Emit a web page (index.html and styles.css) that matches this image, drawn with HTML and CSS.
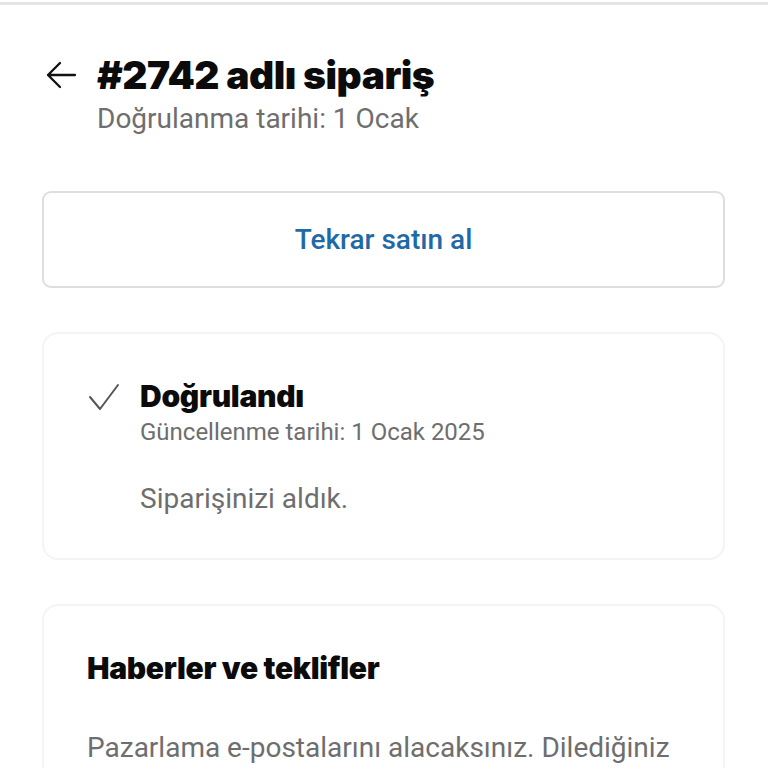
FILE: index.html
```html
<!DOCTYPE html>
<html lang="tr">
<head>
<meta charset="utf-8">
<link rel="stylesheet" href="styles.css">
</head>
<body>
<div class="topbar"></div>
<main class="page">
  <header class="header">
    <svg class="back" viewBox="0 0 32 32" width="32" height="32" aria-hidden="true">
      <path d="M30 16H3M15 4L3 16l12 12" fill="none" stroke="#111" stroke-width="2.3" stroke-linecap="round" stroke-linejoin="round"/>
    </svg>
    <div class="titles">
      <h1 class="title">#2742 adlı sipariş</h1>
      <p class="subtitle">Doğrulanma tarihi: 1 Ocak</p>
    </div>
  </header>

  <button class="buy-again">Tekrar satın al</button>

  <section class="card status">
    <div class="status-row">
      <svg class="check" viewBox="0 0 32 28" width="32" height="28" aria-hidden="true">
        <path d="M2 14l10 12L30 2" fill="none" stroke="#555" stroke-width="2" stroke-linecap="round" stroke-linejoin="round"/>
      </svg>
      <div class="status-text">
        <h2 class="status-title">Doğrulandı</h2>
        <p class="status-date">Güncellenme tarihi: 1 Ocak 2025</p>
        <p class="status-msg">Siparişinizi aldık.</p>
      </div>
    </div>
  </section>

  <section class="card news">
    <h2 class="news-title">Haberler ve teklifler</h2>
    <p class="news-text">Pazarlama e-postalarını alacaksınız. Dilediğiniz zaman abonelikten çıkabilirsiniz.</p>
  </section>
</main>
</body>
</html>
```

FILE: styles.css
```css
* { box-sizing: border-box; }
html, body { margin: 0; padding: 0; background: #fff; }
body { font-family: Roboto, "Noto Sans", sans-serif; color: #111; overflow: hidden; height: 768px; }

.topbar { height: 3px; margin-top: 2px; background: #e4e4e4; }

.page { padding: 0 43px 0 42px; }

.header { display: flex; align-items: flex-start; gap: 20px; padding-top: 46px; }
.back { margin-top: 8px; margin-left: 3px; flex: none; }
.titles { display: flex; flex-direction: column; }
.title {
  margin: 0;
  font-family: Inter, "Noto Sans", sans-serif;
  font-weight: 900;
  font-size: 39px;
  line-height: 48px;
  letter-spacing: -0.5px;
  color: #0b0b0b;
}
.subtitle {
  margin: 3px 0 0;
  font-size: 28px;
  line-height: 34px;
  color: #6e6e6e;
}

.buy-again {
  display: block;
  width: 100%;
  height: 97px;
  margin-top: 55px;
  background: #fff;
  border: 2px solid #dedede;
  border-radius: 9px;
  font-family: Roboto, sans-serif;
  font-weight: 500;
  font-size: 28px;
  color: #1f6aa6;
}

.card {
  border: 2px solid #f4f4f4;
  border-radius: 16px;
  background: #fff;
}

.status { margin-top: 44px; height: 228px; padding: 43px 44px 0 44px; }
.status-row { display: flex; gap: 20px; align-items: flex-start; }
.check { margin-top: 6px; flex: none; }
.status-title {
  margin: 0;
  font-family: Inter, sans-serif;
  font-weight: 900;
  font-size: 30px;
  line-height: 38px;
  letter-spacing: -0.3px;
  color: #0b0b0b;
}
.status-date { margin: 2px 0 0; font-size: 24px; line-height: 30px; color: #6e6e6e; }
.status-msg { margin: 35px 0 0; font-size: 28px; line-height: 34px; color: #6e6e6e; }

.news { margin-top: 44px; height: 300px; padding: 42px 44px 0 43px; }
.news-title {
  margin: 0;
  font-family: Inter, sans-serif;
  font-weight: 900;
  font-size: 30px;
  line-height: 40px;
  letter-spacing: -0.3px;
  color: #0b0b0b;
}
.news-text { margin: 40px 0 0; font-size: 28px; line-height: 40px; color: #6e6e6e; }
```
